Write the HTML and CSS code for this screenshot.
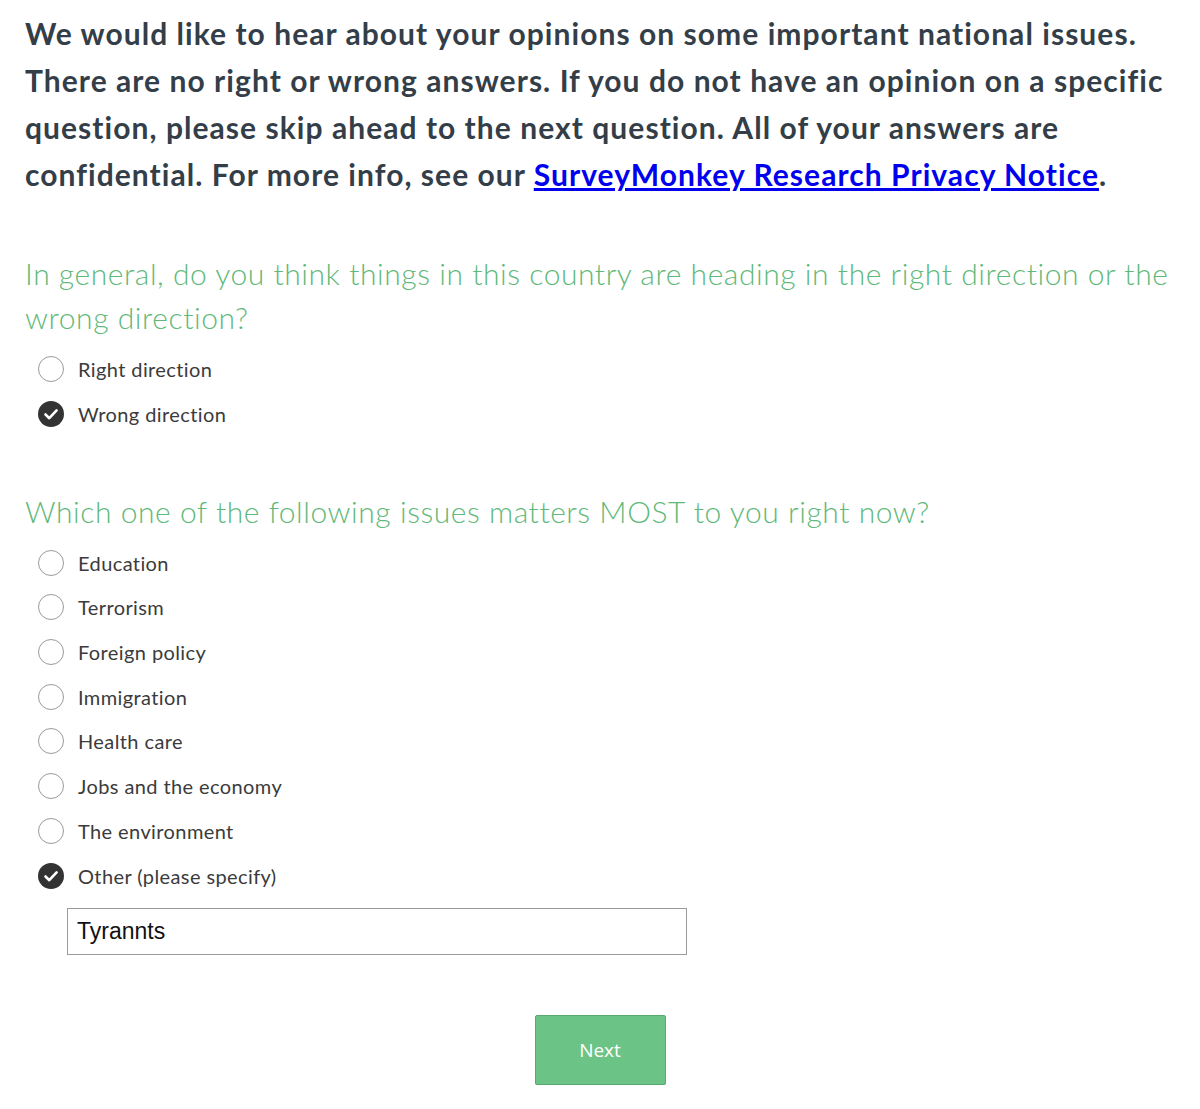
FILE: index.html
```html
<!DOCTYPE html>
<html>
<head>
<meta charset="utf-8">
<link rel="stylesheet" href="styles.css">
</head>
<body>
<div class="page">
  <p class="intro">We would like to hear about your opinions on some important national issues. There are no right or wrong answers. If you do not have an opinion on a specific question, please skip ahead to the next question. All of your answers are confidential. For more info, see our <a href="#">SurveyMonkey Research Privacy Notice</a>.</p>

  <div class="question">
    <h2 class="q-title">In general, do you think things in this country are heading in the right direction or the wrong direction?</h2>
    <ul class="options">
      <li class="option"><span class="radio"></span><span class="label">Right direction</span></li>
      <li class="option"><span class="radio checked"><svg viewBox="0 0 26 26" width="26" height="26"><circle cx="13" cy="13" r="13" fill="#333"/><path d="M7.5 13.5 L11.3 17.2 L18.6 9.4" fill="none" stroke="#fff" stroke-width="2.6" stroke-linecap="round" stroke-linejoin="round"/></svg></span><span class="label">Wrong direction</span></li>
    </ul>
  </div>

  <div class="question q2">
    <h2 class="q-title">Which one of the following issues matters MOST to you right now?</h2>
    <ul class="options">
      <li class="option"><span class="radio"></span><span class="label">Education</span></li>
      <li class="option"><span class="radio"></span><span class="label">Terrorism</span></li>
      <li class="option"><span class="radio"></span><span class="label">Foreign policy</span></li>
      <li class="option"><span class="radio"></span><span class="label">Immigration</span></li>
      <li class="option"><span class="radio"></span><span class="label">Health care</span></li>
      <li class="option"><span class="radio"></span><span class="label">Jobs and the economy</span></li>
      <li class="option"><span class="radio"></span><span class="label">The environment</span></li>
      <li class="option"><span class="radio checked"><svg viewBox="0 0 26 26" width="26" height="26"><circle cx="13" cy="13" r="13" fill="#333"/><path d="M7.5 13.5 L11.3 17.2 L18.6 9.4" fill="none" stroke="#fff" stroke-width="2.6" stroke-linecap="round" stroke-linejoin="round"/></svg></span><span class="label">Other (please specify)</span></li>
    </ul>
    <div class="other-input">Tyrannts</div>
  </div>

  <div class="actions">
    <button class="next">Next</button>
  </div>
</div>
</body>
</html>
```

FILE: styles.css
```css
html, body {
  margin: 0;
  padding: 0;
  background: #fff;
}
.page {
  padding: 10px 0 0 25px;
  font-family: Lato, "Open Sans", sans-serif;
}
.intro {
  margin: 0;
  font-size: 30px;
  line-height: 47px;
  font-weight: 700;
  color: #333e48;
  letter-spacing: 1.05px;
  width: 1150px;
}
.intro a {
  color: #0000ee;
  text-decoration: underline;
}
.question {
  margin-top: 53px;
}
.q2 {
  margin-top: 53px;
}
.q-title {
  margin: 0;
  font-size: 30px;
  line-height: 44px;
  font-weight: 300;
  color: #5fb97a;
  letter-spacing: 0.55px;
}
.options {
  list-style: none;
  margin: 8px 0 0 0;
  padding: 0 0 0 13px;
}
.q2 .options {
  margin-top: 7px;
}
.option {
  display: flex;
  align-items: center;
  height: 44.7px;
}
.radio {
  width: 26px;
  height: 26px;
  box-sizing: border-box;
  border: 1.5px solid #9a9a9a;
  border-radius: 50%;
  flex: none;
}
.radio.checked {
  border: none;
}
.radio svg {
  display: block;
}
.label {
  margin-left: 14px;
  font-size: 20px;
  color: #3b3b3b;
  letter-spacing: 0.4px;
}
.other-input {
  margin: 10px 0 0 42px;
  width: 620px;
  height: 47px;
  box-sizing: border-box;
  border: 1px solid #9b9b9b;
  padding: 0 9px;
  display: flex;
  align-items: center;
  font-family: "Liberation Sans", Arial, sans-serif;
  font-size: 23px;
  color: #111;
}
.actions {
  display: flex;
  justify-content: center;
  width: 1150px;
  margin-top: 60px;
}
.next {
  width: 131px;
  height: 70px;
  background: #6bc486;
  border: 1px solid #58a86f;
  border-radius: 2px;
  color: #fff;
  font-family: "Open Sans", Lato, sans-serif;
  font-size: 19px;
  box-shadow: 0 3px 0 #e4e4e4;
}
```
